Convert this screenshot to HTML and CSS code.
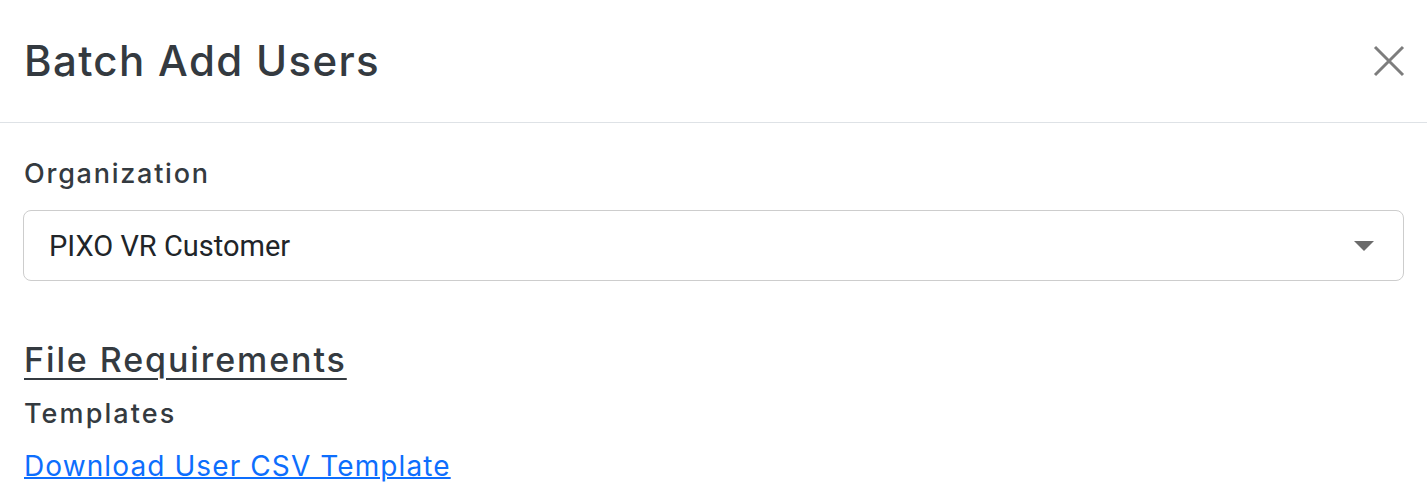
FILE: index.html
```html
<!DOCTYPE html>
<html>
<head>
<meta charset="utf-8">
<link rel="stylesheet" href="styles.css">
</head>
<body>
<div class="modal">
  <div class="modal-header">
    <h5 class="modal-title">Batch Add Users</h5>
    <button class="close" aria-label="Close">
      <svg width="32" height="32" viewBox="0 0 32 32"><path d="M2 2 L30 30 M30 2 L2 30" stroke="#7d7d7d" stroke-width="3" fill="none"/></svg>
    </button>
  </div>
  <div class="modal-body">
    <label class="field-label">Organization</label>
    <div class="select">
      <span class="select-value">PIXO VR Customer</span>
      <svg class="caret" width="20" height="10" viewBox="0 0 20 10"><path d="M0 0 H20 L10 10 Z" fill="#6b6b6b"/></svg>
    </div>
    <h4 class="section-title">File Requirements</h4>
    <div class="sub-title">Templates</div>
    <a class="link" href="#">Download User CSV Template</a>
  </div>
</div>
</body>
</html>
```

FILE: styles.css
```css
html, body {
  margin: 0;
  padding: 0;
  background: #fff;
}
body {
  font-family: "Inter", "Open Sans", sans-serif;
  color: #343a40;
}
.modal {
  width: 1427px;
}
.modal-header {
  height: 122px;
  border-bottom: 1px solid #dee2e6;
  box-sizing: content-box;
  display: flex;
  align-items: center;
  justify-content: space-between;
  padding: 0 22px 0 24px;
}
.modal-title {
  margin: 0;
  font-size: 42px;
  font-weight: 500;
  line-height: 1.2;
  letter-spacing: 1.35px;
}
.close {
  border: 0;
  background: none;
  padding: 0;
  width: 32px;
  height: 32px;
  display: flex;
}
.modal-body {
  padding: 35px 23px 0 23px;
}
.field-label {
  display: block;
  font-size: 27px;
  font-weight: 500;
  line-height: 32px;
  margin-left: 1px;
  letter-spacing: 1.75px;
}
.select {
  margin-top: 20px;
  height: 69px;
  border: 1px solid #cdcdcd;
  border-radius: 8px;
  display: flex;
  align-items: center;
  justify-content: space-between;
  padding: 0 29px 0 25px;
}
.select-value {
  font-family: "Roboto", sans-serif;
  font-size: 29px;
  color: #212529;
}
.section-title {
  margin: 59px 0 0 1px;
  font-size: 34px;
  font-weight: 500;
  line-height: 40px;
  letter-spacing: 1.9px;
  text-decoration: underline;
  text-underline-offset: 6px;
  text-decoration-thickness: 2px;
}
.sub-title {
  margin: 14px 0 0 1px;
  font-size: 27px;
  font-weight: 500;
  line-height: 40px;
  letter-spacing: 2.1px;
}
.link {
  display: inline-block;
  margin: 12px 0 0 1px;
  font-size: 28px;
  line-height: 40px;
  color: #0d6efd;
  letter-spacing: 1.1px;
  text-decoration-thickness: 2px;
}
```
